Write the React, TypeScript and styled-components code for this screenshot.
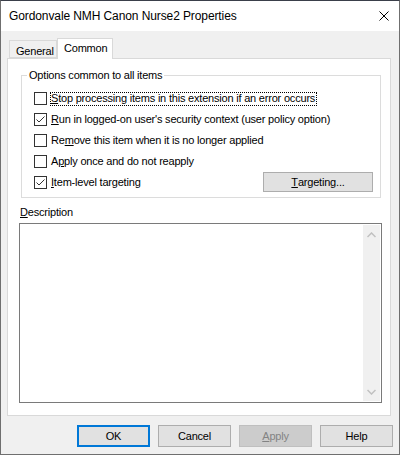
import React from 'react';
import styled, { createGlobalStyle } from 'styled-components';

const GlobalStyle = createGlobalStyle`
  html, body {
    margin: 0;
    padding: 0;
    background: #ffffff;
  }
  body {
    font-family: 'Liberation Sans', Arial, sans-serif;
    color: #000;
  }
  * {
    box-sizing: border-box;
  }
`;

const DialogWindow = styled.div`
  width: 400px;
  height: 455px;
  border: 1px solid #6f6f6f;
  border-top-color: #3a3f4a;
  background-color: #f0f0f0;
  display: flex;
  flex-direction: column;
`;

const TitleBar = styled.div`
  height: 30px;
  flex-shrink: 0;
  background-color: #ffffff;
  display: flex;
  align-items: center;
  justify-content: space-between;
  padding-left: 8px;
  font-size: 12px;
  letter-spacing: -0.1px;
`;

const CloseBox = styled.div`
  width: 30px;
  height: 30px;
  display: flex;
  align-items: center;
  justify-content: center;
`;

const Body = styled.div`
  flex: 1;
  display: flex;
  flex-direction: column;
  padding: 7px 8px 0 6px;
  font-size: 11px;
  letter-spacing: -0.2px;
`;

const TabStrip = styled.div`
  display: flex;
  align-items: flex-end;
  height: 21px;
  padding-left: 2px;
  margin-bottom: -1px;
  position: relative;
  z-index: 1;
`;

const Tab = styled.div<{ $active?: boolean; $width: number }>`
  width: ${(p) => p.$width}px;
  height: ${(p) => (p.$active ? 21 : 18)}px;
  margin-bottom: ${(p) => (p.$active ? 0 : 1)}px;
  padding: ${(p) => (p.$active ? '3px 0 0 6px' : '4px 0 0 6px')};
  line-height: 13px;
  background-color: ${(p) => (p.$active ? '#ffffff' : '#f0f0f0')};
  border: 1px solid #d9d9d9;
  border-bottom: ${(p) => (p.$active ? 'none' : '1px solid #d9d9d9')};
`;

const Panel = styled.div`
  height: 358px;
  background-color: #ffffff;
  border: 1px solid #d9d9d9;
  padding: 16px 9px 0 13px;
`;

const GroupBox = styled.div`
  position: relative;
  border: 1px solid #dcdcdc;
  padding: 12px 7px 4px 12px;
`;

const GroupLegend = styled.span`
  position: absolute;
  top: -7px;
  left: 5px;
  padding: 0 2px;
  line-height: 13px;
  background-color: #ffffff;
`;

const OptionRow = styled.div`
  height: 21px;
  display: flex;
  align-items: center;
  justify-content: space-between;
`;

const CheckItem = styled.div`
  display: flex;
  align-items: center;
  gap: 3px;
`;

const CheckBox = styled.span`
  width: 13px;
  height: 13px;
  border: 1px solid #333333;
  background-color: #ffffff;
  display: flex;
  align-items: center;
  justify-content: center;
`;

const CheckLabel = styled.span<{ $focused?: boolean }>`
  line-height: 11px;
  padding: 0 1px 1px 0;
  border: 1px ${(p) => (p.$focused ? 'dotted #000000' : 'solid transparent')};
  white-space: nowrap;
`;

const Key = styled.u`
  text-decoration: underline;
  text-underline-offset: 1px;
`;

const PushButton = styled.div<{ $width: number; $height: number; $variant?: 'default' | 'disabled' }>`
  width: ${(p) => p.$width}px;
  height: ${(p) => p.$height}px;
  display: flex;
  align-items: center;
  justify-content: center;
  background-color: ${(p) => (p.$variant === 'disabled' ? '#cccccc' : '#e1e1e1')};
  border: ${(p) =>
    p.$variant === 'default'
      ? '2px solid #0078d7'
      : p.$variant === 'disabled'
      ? '1px solid #bfbfbf'
      : '1px solid #adadad'};
  color: ${(p) => (p.$variant === 'disabled' ? '#838383' : '#000000')};
  line-height: 13px;
  align-self: flex-start;
`;

const FieldLabel = styled.div`
  margin-top: 8px;
  margin-left: -1px;
  line-height: 13px;
`;

const TextBox = styled.div`
  margin: 4px -1px 0 -2px;
  height: 180px;
  border: 1px solid #7a7a7a;
  background-color: #ffffff;
  padding: 1px;
  display: flex;
  justify-content: flex-end;
`;

const ScrollBar = styled.div`
  width: 17px;
  background-color: #f0f0f0;
  display: flex;
  flex-direction: column;
  justify-content: space-between;
  align-items: center;
  padding: 7px 0 6px;
`;

const Footer = styled.div`
  display: flex;
  justify-content: flex-end;
  gap: 8px;
  margin: 9px -2px 0 0;
`;

const Chevron = ({ down }: { down?: boolean }) => (
  <svg width="9" height="6" viewBox="0 0 9 6">
    <polyline
      points={down ? '0.5,1 4.5,5 8.5,1' : '0.5,5 4.5,1 8.5,5'}
      fill="none"
      stroke="#c0c0c0"
      strokeWidth="1.5"
    />
  </svg>
);

const Check = () => (
  <svg width="11" height="11" viewBox="0 0 11 11">
    <polyline points="1.5,5.5 4,8 9.5,2.5" fill="none" stroke="#333333" strokeWidth="1" />
  </svg>
);

type Option = { before: string; key: string; after: string; checked: boolean; focused?: boolean };

const options: Option[] = [
  { before: '', key: 'S', after: 'top processing items in this extension if an error occurs', checked: false, focused: true },
  { before: '', key: 'R', after: "un in logged-on user's security context (user policy option)", checked: true },
  { before: 'Re', key: 'm', after: 'ove this item when it is no longer applied', checked: false },
  { before: 'A', key: 'p', after: 'ply once and do not reapply', checked: false },
  { before: '', key: 'I', after: 'tem-level targeting', checked: true },
];

const App = () => {
  return (
    <>
      <GlobalStyle />
      <DialogWindow>
        <TitleBar>
          <span>Gordonvale NMH Canon Nurse2 Properties</span>
          <CloseBox>
            <svg width="10" height="10" viewBox="0 0 10 10">
              <path d="M0.5 0.5 L9.5 9.5 M9.5 0.5 L0.5 9.5" stroke="#000" strokeWidth="1" />
            </svg>
          </CloseBox>
        </TitleBar>
        <Body>
          <TabStrip>
            <Tab $width={48}>General</Tab>
            <Tab $width={56} $active>
              Common
            </Tab>
          </TabStrip>
          <Panel>
            <GroupBox>
              <GroupLegend>Options common to all items</GroupLegend>
              {options.map((o, i) => (
                <OptionRow key={i}>
                  <CheckItem>
                    <CheckBox>{o.checked && <Check />}</CheckBox>
                    <CheckLabel $focused={o.focused}>
                      {o.before}
                      <Key>{o.key}</Key>
                      {o.after}
                    </CheckLabel>
                  </CheckItem>
                  {i === options.length - 1 && (
                    <PushButton $width={110} $height={20}>
                      <Key>T</Key>argeting...
                    </PushButton>
                  )}
                </OptionRow>
              ))}
            </GroupBox>
            <FieldLabel>
              <Key>D</Key>escription
            </FieldLabel>
            <TextBox>
              <ScrollBar>
                <Chevron />
                <Chevron down />
              </ScrollBar>
            </TextBox>
          </Panel>
          <Footer>
            <PushButton $width={73} $height={22} $variant="default">
              OK
            </PushButton>
            <PushButton $width={73} $height={22}>
              Cancel
            </PushButton>
            <PushButton $width={73} $height={22} $variant="disabled">
              <Key>A</Key>pply
            </PushButton>
            <PushButton $width={73} $height={22}>
              Help
            </PushButton>
          </Footer>
        </Body>
      </DialogWindow>
    </>
  );
};

export default App;
